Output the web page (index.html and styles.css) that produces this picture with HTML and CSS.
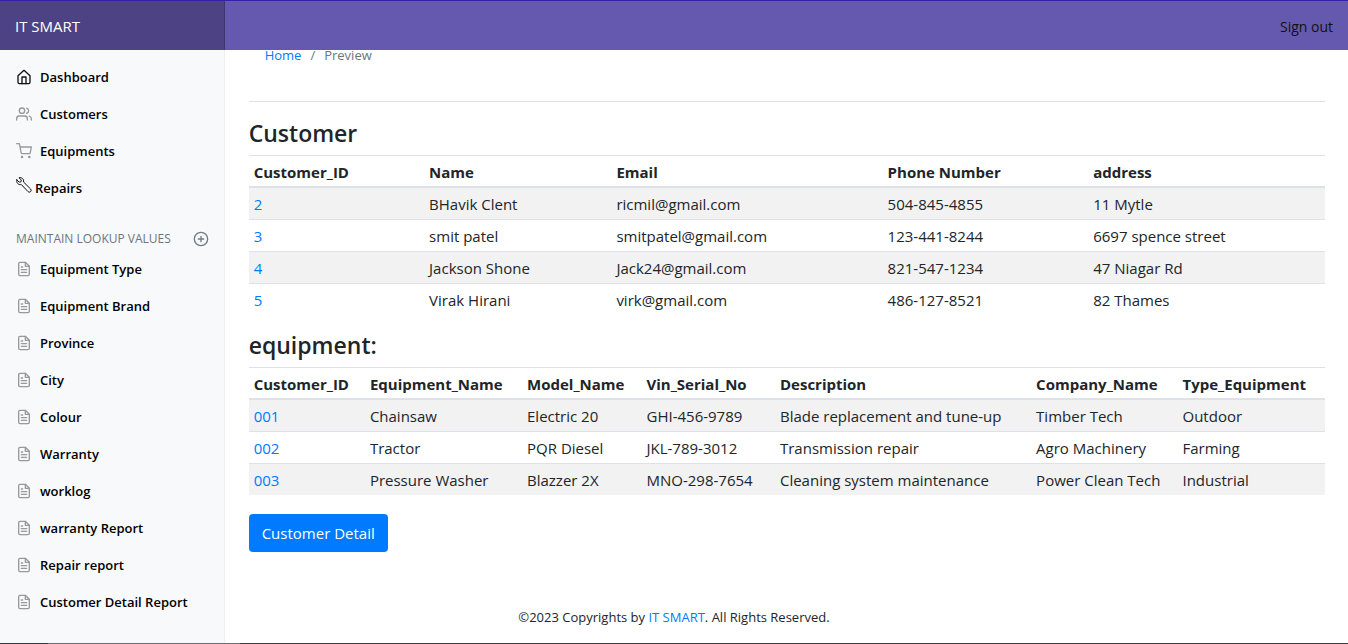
FILE: index.html
```html
<!DOCTYPE html>
<html lang="en">
<head>
<meta charset="utf-8">
<meta name="viewport" content="width=device-width, initial-scale=1">
<title>IT SMART</title>
<link rel="stylesheet" href="styles.css">
</head>
<body>
<svg class="sprite" aria-hidden="true">
  <symbol id="file" viewBox="0 0 24 24"><path d="M14 2H6a2 2 0 0 0-2 2v16a2 2 0 0 0 2 2h12a2 2 0 0 0 2-2V8z"/><path d="M14 2v6h6M16 13H8M16 17H8M10 9H8"/></symbol>
</svg>
<header class="topbar">
  <a class="brand" href="#">IT SMART</a>
  <a class="signout" href="#">Sign out</a>
</header>
<div class="layout">
  <nav class="sidebar" aria-label="Main">
    <ul class="menu">
      <li><a href="#"><svg class="icon icon-active" viewBox="0 0 24 24"><path d="M3 10l9-8 9 8v10a2 2 0 0 1-2 2H5a2 2 0 0 1-2-2z"/><path d="M9 22V12h6v10"/></svg>Dashboard</a></li>
      <li><a href="#"><svg class="icon" viewBox="0 0 24 24"><path d="M17 21v-2a4 4 0 0 0-4-4H5a4 4 0 0 0-4 4v2"/><circle cx="9" cy="7" r="4"/><path d="M23 21v-2a4 4 0 0 0-3-3.87M16 3.13a4 4 0 0 1 0 7.75"/></svg>Customers</a></li>
      <li><a href="#"><svg class="icon" viewBox="0 0 24 24"><circle cx="9" cy="21" r="1"/><circle cx="20" cy="21" r="1"/><path d="M1 1h4l2.68 13.39a2 2 0 0 0 2 1.61h9.72a2 2 0 0 0 2-1.61L23 6H6"/></svg>Equipments</a></li>
      <li><a class="repairs" href="#"><svg class="icon icon-wrench" viewBox="0 0 16 16"><path d="M.8 2.800L3.200 5.200 5 4.800 5.300 3.100 3 .8C5.500 0 8.300 2 7.500 5L14.600 12A1.800 1.800 0 0 1 12 14.600L5.300 7.500C2.500 8.300 0 5.800.8 2.800z"/></svg>Repairs</a></li>
    </ul>
    <h2 class="menu-title"><span>Maintain Lookup Values</span><a href="#" aria-label="Add"><svg class="icon icon-add" viewBox="0 0 24 24"><circle cx="12" cy="12" r="10"/><path d="M12 8v8M8 12h8"/></svg></a></h2>
    <ul class="menu">
      <li><a href="#"><svg class="icon"><use href="#file"/></svg>Equipment Type</a></li>
      <li><a href="#"><svg class="icon"><use href="#file"/></svg>Equipment Brand</a></li>
      <li><a href="#"><svg class="icon"><use href="#file"/></svg>Province</a></li>
      <li><a href="#"><svg class="icon"><use href="#file"/></svg>City</a></li>
      <li><a href="#"><svg class="icon"><use href="#file"/></svg>Colour</a></li>
      <li><a href="#"><svg class="icon"><use href="#file"/></svg>Warranty</a></li>
      <li><a href="#"><svg class="icon"><use href="#file"/></svg>worklog</a></li>
      <li><a href="#"><svg class="icon"><use href="#file"/></svg>warranty Report</a></li>
      <li><a href="#"><svg class="icon"><use href="#file"/></svg>Repair report</a></li>
      <li><a href="#"><svg class="icon"><use href="#file"/></svg>Customer Detail Report</a></li>
    </ul>
  </nav>
  <div class="page">
    <main class="content">
      <nav aria-label="Breadcrumb">
        <ol class="breadcrumb"><li><a href="#">Home</a></li><li>Preview</li></ol>
      </nav>
      <h2 class="heading first">Customer</h2>
      <table class="table">
        <colgroup><col class="c16"><col class="c17"><col class="c25"><col class="c19"><col></colgroup>
        <thead><tr><th>Customer_ID</th><th>Name</th><th>Email</th><th>Phone Number</th><th>address</th></tr></thead>
        <tbody>
          <tr><td><a href="#">2</a></td><td>BHavik Clent</td><td>ricmil@gmail.com</td><td>504-845-4855</td><td>11 Mytle</td></tr>
          <tr><td><a href="#">3</a></td><td>smit patel</td><td>smitpatel@gmail.com</td><td>123-441-8244</td><td>6697 spence street</td></tr>
          <tr><td><a href="#">4</a></td><td>Jackson Shone</td><td>Jack24@gmail.com</td><td>821-547-1234</td><td>47 Niagar Rd</td></tr>
          <tr><td><a href="#">5</a></td><td>Virak Hirani</td><td>virk@gmail.com</td><td>486-127-8521</td><td>82 Thames</td></tr>
        </tbody>
      </table>
      <h2 class="heading">equipment:</h2>
      <table class="table">
        <colgroup><col class="e-id"><col class="e-name"><col class="e-model"><col class="e-vin"><col class="e-desc"><col class="e-company"><col></colgroup>
        <thead><tr><th>Customer_ID</th><th>Equipment_Name</th><th>Model_Name</th><th>Vin_Serial_No</th><th>Description</th><th>Company_Name</th><th>Type_Equipment</th></tr></thead>
        <tbody>
          <tr><td><a href="#">001</a></td><td>Chainsaw</td><td>Electric 20</td><td>GHI-456-9789</td><td>Blade replacement and tune-up</td><td>Timber Tech</td><td>Outdoor</td></tr>
          <tr><td><a href="#">002</a></td><td>Tractor</td><td>PQR Diesel</td><td>JKL-789-3012</td><td>Transmission repair</td><td>Agro Machinery</td><td>Farming</td></tr>
          <tr><td><a href="#">003</a></td><td>Pressure Washer</td><td>Blazzer 2X</td><td>MNO-298-7654</td><td>Cleaning system maintenance</td><td>Power Clean Tech</td><td>Industrial</td></tr>
        </tbody>
      </table>
      <button class="button" type="button">Customer Detail</button>
    </main>
    <footer class="footer">©2023 Copyrights by <a href="#">IT SMART</a>. All Rights Reserved.</footer>
  </div>
</div>
<div class="edge"></div>
</body>
</html>
```

FILE: styles.css
```css
* { box-sizing: border-box; }

body {
  margin: 0;
  min-height: 100vh;
  display: flex;
  flex-direction: column;
  background: #fff;
  color: #212529;
  font: 15px/24px "Open Sans", "Noto Sans", sans-serif;
}

a { color: #007bff; text-decoration: none; }
ul, ol { list-style: none; margin: 0; padding: 0; }
.sprite { display: none; }

.topbar {
  position: fixed;
  inset: 0 0 auto;
  z-index: 2;
  height: 50px;
  display: flex;
  justify-content: space-between;
  background: #6459af;
  border-top: 1px solid #361fa5;
}
.brand {
  width: 16.7%;
  padding: 13px 15px;
  background: #4d4384;
  border-right: 1px solid #3e366c;
  color: #fff;
}
.signout { padding: 14px 15px; color: #111; font-size: 14px; }

.layout { flex: 1; display: grid; grid-template-columns: 1fr 5fr; }

.sidebar {
  padding-top: 58px;
  background: #f8f9fb;
  border-right: 1px solid #eceef1;
  font-size: 13px;
  font-weight: 600;
}
.menu a {
  display: flex;
  align-items: center;
  gap: 8px;
  height: 37px;
  padding: 0 16px;
  color: #000;
}
.icon {
  width: 16px;
  height: 16px;
  flex: none;
  fill: none;
  stroke: #999;
  stroke-width: 2;
  stroke-linecap: round;
  stroke-linejoin: round;
}
.icon-active { stroke: #111; }
.icon-add { display: block; stroke: #727b84; }
.menu .repairs { gap: 3px; }
.icon-wrench { stroke: #111; stroke-width: 1; margin-bottom: 5px; }
.menu-title {
  display: flex;
  justify-content: space-between;
  align-items: center;
  margin: 23px 0 1px;
  padding: 0 15px 0 16px;
  color: #6c757d;
  font-size: 12px;
  font-weight: 400;
  line-height: 20px;
  text-transform: uppercase;
}

.page { min-width: 0; }
.content { padding: 33px 23px 0 24px; }
.breadcrumb {
  display: flex;
  padding: 12px 16px;
  height: 69px;
  border-bottom: 1px solid #dee2e6;
  color: #6c757d;
  font-size: 13px;
  line-height: 20px;
}
.breadcrumb li + li::before { content: "/"; padding: 0 9px; }
.heading { margin: 16px 0 7px; font-size: 23px; line-height: 29px; font-weight: 600; }
.heading.first { margin-top: 17px; }

.table { width: 100%; border-collapse: collapse; table-layout: fixed; border-top: 1px solid #dee2e6; }
.table th, .table td { padding: 4px 5px 3px; text-align: left; border-top: 1px solid #dee2e6; white-space: nowrap; }
.table th { padding-bottom: 2px; border-bottom: 2px solid #dee2e6; font-weight: 700; }
.table tbody tr:nth-child(odd) { background: #f2f2f2; }
.c16 { width: 16.3%; }
.c17 { width: 17.4%; }
.c25 { width: 25.2%; }
.c19 { width: 19.1%; }
.e-id { width: 10.8%; }
.e-name { width: 14.6%; }
.e-model { width: 11.1%; }
.e-vin { width: 12.4%; }
.e-desc { width: 23.8%; }
.e-company { width: 13.6%; }

.button {
  display: block;
  margin-top: 19px;
  padding: 7px 13px;
  border: 0;
  border-radius: 4px;
  background: #007bff;
  color: #fff;
  font: inherit;
}
.footer { padding: 53px 20% 12px 0; text-align: center; font-size: 13px; }

.edge { height: 1px; background: linear-gradient(to right, #343a40 48px, #6b6d70 48px 240px, #3c3c3c 240px); }
```
